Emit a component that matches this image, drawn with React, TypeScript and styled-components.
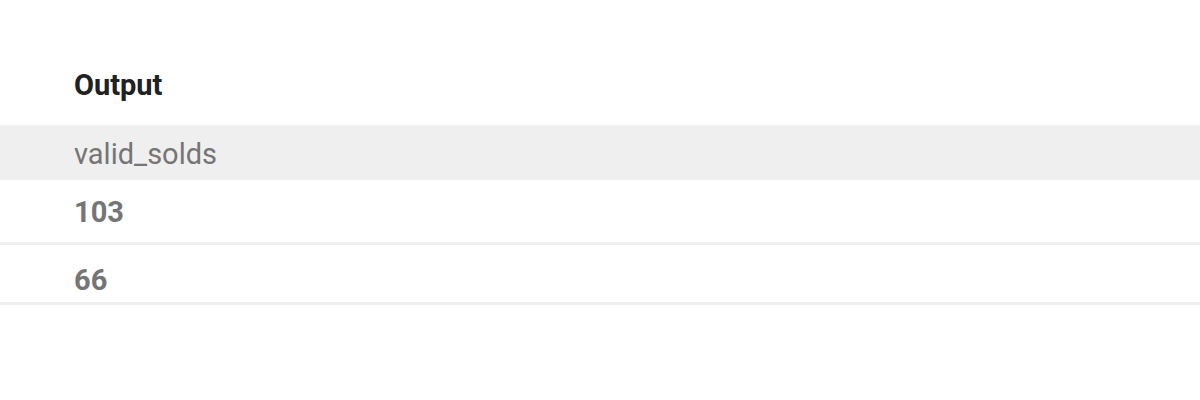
import React from 'react';
import styled, { createGlobalStyle } from 'styled-components';

const GlobalStyle = createGlobalStyle`
  body {
    margin: 0;
    background: #ffffff;
    font-family: Roboto, "Liberation Sans", sans-serif;
  }
`;

const Page = styled.div`
  width: 1200px;
  height: 400px;
  background: #ffffff;
`;

const Title = styled.h2`
  margin: 0;
  padding: 69px 0 24px 74px;
  font-size: 29px;
  line-height: 32px;
  font-weight: 700;
  color: #212121;
`;

const Table = styled.div`
  display: flex;
  flex-direction: column;
`;

const HeaderCell = styled.div`
  height: 55px;
  box-sizing: border-box;
  display: flex;
  align-items: center;
  padding: 3px 0 0 74px;
  background: #efefef;
  font-size: 29px;
  line-height: 32px;
  color: #757575;
`;

const Row = styled.div<{ $h: number; $top: number }>`
  height: ${({ $h }) => $h}px;
  box-sizing: border-box;
  padding: ${({ $top }) => $top}px 0 0 74px;
  border-bottom: 3px solid #efefef;
  font-size: 29px;
  line-height: 32px;
  font-weight: 700;
  color: #757575;
`;

const rows = [
  { value: '103', h: 65, top: 16 },
  { value: '66', h: 60, top: 19 },
];

const App: React.FC = () => {
  return (
    <Page>
      <GlobalStyle />
      <Title>Output</Title>
      <Table>
        <HeaderCell>valid_solds</HeaderCell>
        {rows.map((r) => (
          <Row key={r.value} $h={r.h} $top={r.top}>
            {r.value}
          </Row>
        ))}
      </Table>
    </Page>
  );
};

export default App;
